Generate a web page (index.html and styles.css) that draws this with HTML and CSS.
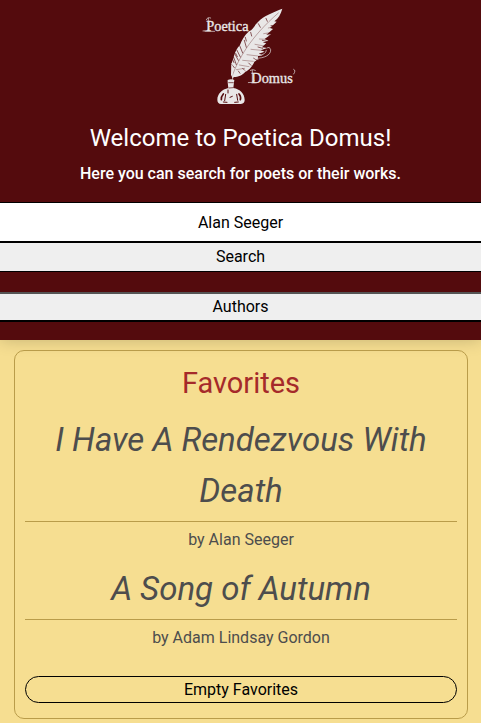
FILE: index.html
```html
<!DOCTYPE html>
<html lang="en">
<head>
<meta charset="utf-8">
<meta name="viewport" content="width=device-width, initial-scale=1">
<title>Poetica Domus</title>
<link rel="stylesheet" href="styles.css">
</head>
<body>
<header class="header">
  <svg class="logo" viewBox="-57 0 417 345" role="img" aria-label="Poetica Domus">
    <g fill="#e9e7e7">
      <path d="M277 26C250 37 221 47 204 66C193 76 189 89 177 94C163 107 155 122 150 135C141 144 134 157 131 172L124 193L123 225L128 235L132 231C144 230 158 226 166 215C176 211 188 199 193 185C202 181 205 174 204 168L218 166L206 161L224 155L212 151L232 144L216 142L229 129L218 128L235 122L224 117L243 103L232 102L249 87L240 84L260 65L253 64C265 56 272 43 277 26Z"/>
      <path d="M113 240Q123 236 133 240L132 247L130 264C150 267 164 281 164 300Q164 311 153 312H93Q82 311 82 299C82 282 96 268 115 264L113 247Z"/>
    </g>
    <g fill="none" stroke="#540b0d" stroke-linecap="round">
      <path stroke-width="1" d="M126 230C143 180 181 111 265 39M139 209L164 205M148 195L177 200M158 181L190 184M171 164L204 168M183 148L214 151M195 133L222 138M208 117L229 118M221 101L240 98M235 84L251 80"/>
      <path stroke-width="2" d="M133 203L125 193M139 194L131 172M145 181L134 161M151 171L141 151M158 159L149 137M169 142L163 121M128 178L132 188M137 160L142 170M166 112L169 123M182 97L185 108M205 71L211 82M228 55L232 64M150 220L145 213M164 211L158 205M183 196L176 189M200 180L190 174M218 145L204 141M230 124L217 121M242 106L231 103M253 77L243 77"/>
      <path stroke-width="2" d="M116 248H130M117 264L129 263"/>
      <path stroke-width="5" d="M100 282Q93 290 94 299M147 282Q154 290 151 299"/>
      <path stroke-width="3" d="M107 283L104 302M140 283L143 301M114 270V279M120 292L127 289M100 306L111 307M134 307L145 306"/>
    </g>
    <g fill="none" stroke="#e9e7e7" stroke-width="2" stroke-linecap="round">
      <path d="M126 190L128 240M196 175C224 175 243 165 242 149Q239 138 232 143M205 166Q228 165 229 151M188 174Q203 170 204 179M311 208Q319 211 311 222"/>
      <path d="M49 59Q52 50 62 54M39 93Q52 94 58 88M45 94H74M55 55V91M181 211Q188 206 196 211M175 248Q186 250 193 242M187 211V247"/>
    </g>
    <g class="logo-text">
      <text x="49" y="94">Poetica</text>
      <text x="184" y="249">Domus</text>
    </g>
  </svg>
  <h1 class="welcome">Welcome to Poetica Domus!</h1>
  <p class="intro">Here you can search for poets or their works.</p>
  <form class="search">
    <input class="query" type="text" value="Alan Seeger" aria-label="Poet or work">
    <button class="submit" type="button">Search</button>
  </form>
  <button class="authors" type="button">Authors</button>
</header>
<main class="favorites">
  <h2 class="heading">Favorites</h2>
  <article class="poem">
    <h3 class="title">I Have A Rendezvous With Death</h3>
    <p class="author">by Alan Seeger</p>
  </article>
  <article class="poem">
    <h3 class="title">A Song of Autumn</h3>
    <p class="author">by Adam Lindsay Gordon</p>
  </article>
  <button class="empty" type="button">Empty Favorites</button>
</main>
</body>
</html>
```
FILE: styles.css
```css
* {
  box-sizing: border-box;
}

body {
  margin: 0;
  background: #f6de91;
  color: #4d4d4d;
  font-family: Roboto, sans-serif;
  font-size: 16px;
  line-height: 26px;
  text-align: center;
}

h1, h2, h3, p {
  margin: 0;
  font-weight: 400;
}

button, input {
  display: block;
  width: 100%;
  margin: 0;
  border: 1px solid #000;
  border-radius: 0;
  color: #000;
  font: inherit;
  text-align: center;
}

.header {
  padding-bottom: 18px;
  background: #540b0d;
  color: #fff;
  box-shadow: 0 0 16px rgba(0, 0, 0, 0.2);
}

.logo {
  display: block;
  width: 139px;
  height: 115px;
  margin: 0 auto;
}

.logo-text {
  fill: #e9e7e7;
  stroke: #e9e7e7;
  stroke-width: 1px;
  font-family: "Liberation Serif", serif;
  font-size: 43px;
}

.welcome {
  padding-top: 4px;
  font-size: 24px;
  line-height: 38px;
}

.intro {
  padding-top: 4px;
  font-weight: 500;
}

.search {
  margin: 15px 0 20px;
}

.query {
  height: 40px;
  padding: 0;
  border-width: 1px 0;
  background: #fff;
}

.submit {
  height: 30px;
  padding: 0;
  border-width: 1px 0;
  background: #efefef;
}

.authors {
  height: 30px;
  padding: 0;
  border-width: 2px 0;
  border-top-color: #555;
  background: #efefef;
}

.favorites {
  margin: 10px 13px 4px 14px;
  padding: 10px;
  border: 1px solid #b99c4a;
  border-radius: 10px;
}

.heading {
  padding-bottom: 9px;
  color: #a52a2a;
  font-size: 29px;
  line-height: 44px;
}

.poem {
  padding-bottom: 10px;
}

.title {
  padding-bottom: 5px;
  border-bottom: 1px solid #b99c4a;
  font-size: 33px;
  font-style: italic;
  line-height: 51px;
}

.author {
  padding-top: 5px;
}

.empty {
  height: 27px;
  margin: 15px 0 5px;
  padding: 0;
  border-radius: 14px;
  background: transparent;
}
```
